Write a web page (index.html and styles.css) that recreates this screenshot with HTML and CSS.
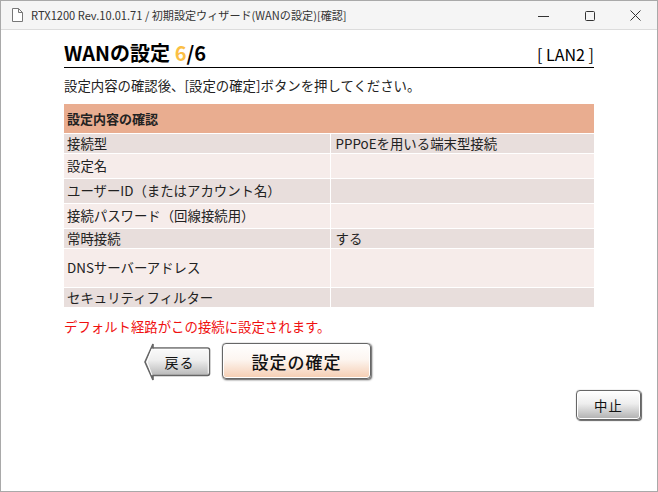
FILE: index.html
```html
<!DOCTYPE html>
<html lang="ja">
<head>
    <meta charset="UTF-8">
    <title>RTX1200 Rev.10.01.71 / 初期設定ウィザード(WANの設定)[確認]</title>
    <link rel="stylesheet" href="styles.css">
</head>
<body>
    <div class="window">
        <!-- タイトルバー -->
        <div class="titlebar">
            <svg class="doc-icon" width="11" height="14" viewBox="0 0 11 14">
                <path d="M.5 .5H6.500L10.500 4.500V13.500H.5Z M6.500 .5V4.500H10.500" fill="#fff" stroke="#777" stroke-width="1"/>
            </svg>
            <span class="title">RTX1200 Rev.10.01.71 / 初期設定ウィザード(WANの設定)[確認]</span>
            <svg class="win-btn" width="11" height="11" viewBox="0 0 11 11">
                <path d="M0 6.500H11" stroke="#333" fill="none"/>
            </svg>
            <svg class="win-btn" width="11" height="11" viewBox="0 0 11 11">
                <rect x="1.500" y="1.500" width="9" height="9" rx="1" stroke="#333" fill="none"/>
            </svg>
            <svg class="win-btn" width="11" height="11" viewBox="0 0 11 11">
                <path d="M.5 .5L10.500 10.500M10.500 .5L.5 10.500" stroke="#333" fill="none"/>
            </svg>
        </div>

        <div class="content">
            <div class="heading">
                <h2>WANの設定 <span class="step">6</span>/6</h2>
                <span class="lan">[ LAN2 ]</span>
            </div>
            <p class="lead">設定内容の確認後、[設定の確定]ボタンを押してください。</p>

            <table class="confirm">
                <colgroup>
                    <col class="col-label">
                    <col>
                </colgroup>
                <tr class="head"><th colspan="2">設定内容の確認</th></tr>
                <tr class="dark h20"><td>接続型</td><td>PPPoEを用いる端末型接続</td></tr>
                <tr class="light h25"><td>設定名</td><td></td></tr>
                <tr class="dark h25"><td>ユーザーID（またはアカウント名）</td><td></td></tr>
                <tr class="light h25"><td>接続パスワード（回線接続用）</td><td></td></tr>
                <tr class="dark h20"><td>常時接続</td><td>する</td></tr>
                <tr class="light h39"><td>DNSサーバーアドレス</td><td></td></tr>
                <tr class="dark h20"><td>セキュリティフィルター</td><td></td></tr>
            </table>

            <p class="notice">デフォルト経路がこの接続に設定されます。</p>

            <div class="actions">
                <button class="btn back-btn">
                    <svg class="back-shape" width="67" height="38" viewBox="0 0 67 38">
                        <defs>
                            <linearGradient id="backFill" x1="0" y1="0" x2="0" y2="1">
                                <stop offset="0" stop-color="#fff"/>
                                <stop offset="0.450" stop-color="#eee"/>
                                <stop offset="1" stop-color="#a8a8a8"/>
                            </linearGradient>
                        </defs>
                        <path d="M9 1L1 19L9 37V32.500H63.500Q65.500 32.500 65.500 30.500V7Q65.500 5 63.500 5H9Z" fill="url(#backFill)" stroke="#666" stroke-width="1.600"/>
                        <path d="M8 6L3 19L8 32M10 6.300H63.500Q64.300 6.300 64.300 7V30.500" fill="none" stroke="#fff" stroke-width="1"/>
                    </svg>
                    <span class="back-label">戻る</span>
                </button>
                <button class="btn commit">設定の確定</button>
            </div>
            <div class="cancel-row">
                <button class="btn cancel">中止</button>
            </div>
        </div>
    </div>
</body>
</html>
```

FILE: styles.css
```css
* {
    box-sizing: border-box;
}

html, body {
    margin: 0;
    padding: 0;
    background-color: #fff;
}

body {
    font-family: "Noto Sans CJK JP", "Noto Sans", sans-serif;
    color: #222;
    overflow: hidden;
}

.window {
    width: 658px;
    height: 492px;
    border: 1px solid #a9a9a9;
    background-color: #fff;
}

.titlebar {
    display: flex;
    align-items: center;
    height: 29px;
    background-color: #f5f5f5;
    border-bottom: 1px solid #dcdcdc;
    padding-left: 11px;
}

.doc-icon {
    margin-right: 8px;
}

.title {
    flex: 1;
    font-size: 11.100px;
    color: #333;
    white-space: nowrap;
}

.win-btn {
    margin-right: 35px;
}

.win-btn:last-child {
    margin-right: 16px;
}

.content {
    padding: 10px 63px 0 63px;
}

.heading {
    display: flex;
    justify-content: space-between;
    align-items: flex-end;
    height: 28px;
    border-bottom: 1px solid #000;
}

h2 {
    margin: 0;
    font-size: 20px;
    line-height: 28px;
    font-weight: bold;
    color: #000;
}

.step {
    color: #fbbf45;
}

.lan {
    font-size: 16px;
    line-height: 26px;
    color: #000;
}

.lead {
    margin: 8px 0 0;
    font-size: 13.400px;
    line-height: 19px;
}

.confirm {
    width: 530px;
    margin-top: 9px;
    border-collapse: collapse;
    table-layout: fixed;
    font-size: 13.400px;
}

.col-label {
    width: 266px;
}

.confirm th {
    height: 29px;
    padding: 0 3px;
    background-color: #e9ad90;
    text-align: left;
    font-size: 13px;
    font-weight: bold;
}

.confirm td {
    padding: 0 0 0 5px;
    border-top: 1px solid #fff;
    line-height: 19px;
}

.confirm td:first-child {
    padding-left: 3px;
    border-right: 1px solid #fff;
}

.dark td {
    background-color: #e8dedc;
}

.light td {
    background-color: #f6ecea;
}

.h20 {
    height: 20px;
}

.h25 {
    height: 25px;
}

.h39 {
    height: 39px;
}

.notice {
    margin: 10px 0 0;
    font-size: 13.400px;
    line-height: 18px;
    color: #f01010;
}

.actions {
    display: flex;
    align-items: flex-start;
    gap: 11px;
    margin-top: 8px;
    padding-left: 80px;
}

.btn {
    font-family: inherit;
    color: #111;
    padding: 0;
    cursor: pointer;
}

.back-btn {
    position: relative;
    width: 67px;
    height: 38px;
    border: none;
    background: none;
    font-size: 14px;
    letter-spacing: 1px;
}

.back-shape {
    position: absolute;
    left: 0;
    top: 0;
}

.back-label {
    position: relative;
    left: 2px;
}

.commit {
    width: 149px;
    height: 36px;
    border: 1px solid #666;
    border-radius: 4px;
    background: linear-gradient(#fff, #fdf6f1 45%, #f5cdb2);
    box-shadow: inset 0 0 0 1px #fff, 1px 1px 2px #555, 0 0 1px #888;
    font-size: 17px;
    font-weight: 500;
    letter-spacing: 1px;
}

.cancel-row {
    display: flex;
    justify-content: flex-end;
    margin-top: 9px;
    margin-right: -47px;
}

.cancel {
    width: 65px;
    height: 30px;
    border: 1px solid #666;
    border-radius: 4px;
    background: linear-gradient(#fff, #eee 45%, #b0b0b0);
    box-shadow: inset 0 0 0 1px #fff, 1px 1px 1px #666, 0 0 1px #888;
    font-size: 13.400px;
    letter-spacing: 1px;
}
```
